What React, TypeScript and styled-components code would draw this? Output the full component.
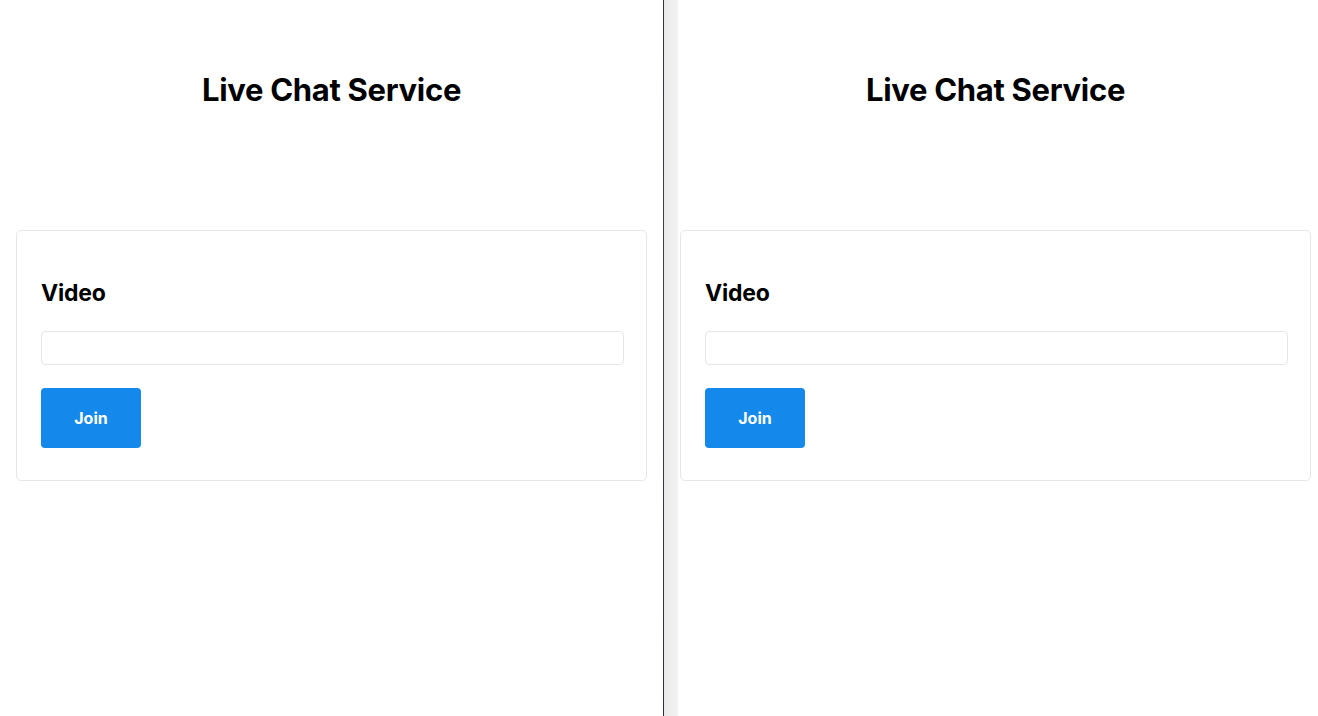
import React from "react";
import styled, { createGlobalStyle } from "styled-components";

const GlobalStyle = createGlobalStyle`
  html, body {
    margin: 0;
    padding: 0;
    background: #ffffff;
    height: 100%;
  }
  body {
    font-family: Inter, "Noto Sans", "Liberation Sans", sans-serif;
    color: #000;
    overflow: hidden;
  }
`;

const Screen = styled.div`
  display: flex;
  width: 1318px;
  height: 716px;
  overflow: hidden;
`;

const Window = styled.div<{ $width: number }>`
  position: relative;
  flex: 0 0 ${(p) => p.$width}px;
  width: ${(p) => p.$width}px;
  height: 716px;
  overflow: hidden;
  background: #fff;
`;

const Divider = styled.div`
  flex: 0 0 1px;
  background: linear-gradient(#2f3440, #3a3f4a 40%, #2b2f38);
`;

const EdgeStrip = styled.div`
  position: absolute;
  left: 0;
  top: 0;
  bottom: 0;
  width: 14px;
  background: linear-gradient(90deg, #e9e9e9, #efefef 60%, #f3f3f3);
`;

const Page = styled.div`
  width: 663px;
  box-sizing: border-box;
  padding: 0 16px;
  display: flex;
  flex-direction: column;
`;

const Title = styled.h1`
  margin: 0;
  height: 230px;
  padding-top: 71px;
  box-sizing: border-box;
  text-align: center;
  font-size: 31px;
  line-height: 38px;
  font-weight: 700;
  letter-spacing: -0.3px;
`;

const Card = styled.section`
  border: 1px solid #e6e6e6;
  border-radius: 5px;
  padding: 48px 22px 32px 24px;
  display: flex;
  flex-direction: column;
  align-items: flex-start;
`;

const CardTitle = styled.h2`
  margin: 0 0 24px;
  font-size: 23px;
  line-height: 28px;
  font-weight: 700;
  letter-spacing: -0.2px;
`;

const Input = styled.input`
  width: 100%;
  box-sizing: border-box;
  height: 34px;
  border: 1px solid #e6e6e6;
  border-radius: 4px;
  margin: 0 0 23px;
  padding: 0 10px;
  font: inherit;
  outline: none;
`;

const Button = styled.button`
  width: 100px;
  height: 60px;
  border: none;
  border-radius: 4px;
  background: #1589eb;
  color: #fff;
  font-family: Inter, "Liberation Sans", sans-serif;
  font-size: 16px;
  font-weight: 700;
  cursor: pointer;
`;

function ChatPage() {
  return (
    <Page>
      <Title>Live Chat Service</Title>
      <Card>
        <CardTitle>Video</CardTitle>
        <Input type="text" />
        <Button>Join</Button>
      </Card>
    </Page>
  );
}

export default function App() {
  return (
    <>
      <GlobalStyle />
      <Screen>
        <Window $width={663}>
          <ChatPage />
        </Window>
        <Divider />
        <Window $width={654}>
          <ChatPage />
          <EdgeStrip />
        </Window>
      </Screen>
    </>
  );
}
